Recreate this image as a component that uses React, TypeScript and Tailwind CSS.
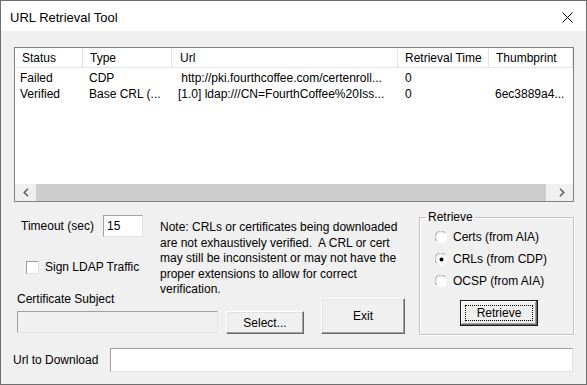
import React from "react";

const Radio = ({ checked }: { checked?: boolean }) => (
  <svg width="13" height="13" viewBox="0 0 13 13" className="shrink-0">
    <circle cx="6.5" cy="6.5" r="5.5" fill="#ffffff" />
    <path d="M1.6 10 A5.5 5.5 0 0 1 10 1.6" stroke="#a0a0a0" strokeWidth="1" fill="none" />
    <path d="M2.5 9.5 A4.5 4.5 0 0 1 9.5 2.5" stroke="#e3e3e3" strokeWidth="1" fill="none" />
    {checked && <circle cx="6.5" cy="6.5" r="2" fill="#000000" />}
  </svg>
);

const Button = ({ label, className }: { label: string; className: string }) => (
  <div
    className={`flex items-center justify-center bg-[#f0f0f0] border-t border-l border-white border-r border-b border-r-[#696969] border-b-[#696969] shadow-[inset_-1px_-1px_0_#a0a0a0,inset_1px_1px_0_#e3e3e3] ${className}`}
  >
    {label}
  </div>
);

const cols = [
  { w: "w-[68px]", head: "Status", hp: "pl-[7px]" },
  { w: "w-[89px]", head: "Type", hp: "pl-[7px]" },
  { w: "w-[226px]", head: "Url", hp: "pl-[8px]" },
  { w: "w-[91px]", head: "Retrieval Time", hp: "pl-[7px]" },
  { w: "w-[84px]", head: "Thumbprint", hp: "pl-[7px]" },
];

const rows = [
  ["Failed", "CDP", " http://pki.fourthcoffee.com/certenroll...", "0", ""],
  ["Verified", "Base CRL (...", "[1.0] ldap:///CN=FourthCoffee%20Iss...", "0", "6ec3889a4..."],
];

const rowPad = ["pl-[5px]", "pl-[6px]", "pl-[6px]", "pl-[7px]", "pl-[6px]"];

export default function App() {
  return (
    <div className="w-[587px] h-[385px] border border-[#6e6e6e] bg-[#f0f0f0] flex flex-col font-['Liberation_Sans',Arial,sans-serif] text-[12px] text-black overflow-hidden leading-[14px]">
      {/* Title bar */}
      <div className="h-[30px] bg-white flex items-center justify-between pl-[9px] pr-[13px] pt-[3px] shrink-0">
        <span className="text-[13px]">URL Retrieval Tool</span>
        <svg width="11" height="11" viewBox="0 0 11 11">
          <path d="M0.5 0.5 L10.5 10.5 M10.5 0.5 L0.5 10.5" stroke="#000" strokeWidth="1" />
        </svg>
      </div>

      {/* Client */}
      <div className="flex flex-col flex-1">
        {/* List view */}
        <div className="mt-[16px] ml-[13px] w-[560px] h-[155px] border border-[#828282] bg-white flex flex-col">
          <div className="h-[20px] flex border-b border-[#e5e5e5] shrink-0">
            {cols.map((c, i) => (
              <div
                key={i}
                className={`${c.w} ${c.hp} h-full flex items-center border-r border-[#e5e5e5] shrink-0 whitespace-nowrap`}
              >
                {c.head}
              </div>
            ))}
          </div>
          <div className="flex-1 pt-[2px]">
            {rows.map((r, ri) => (
              <div key={ri} className="h-[16px] flex items-center">
                {r.map((cell, ci) => (
                  <div
                    key={ci}
                    className={`${cols[ci].w} ${rowPad[ci]} shrink-0 whitespace-pre overflow-hidden`}
                  >
                    {cell}
                  </div>
                ))}
              </div>
            ))}
          </div>
          <div className="h-[17px] flex bg-[#f0f0f0] shrink-0">
            <div className="w-[21px] flex items-center justify-center">
              <svg width="6" height="9" viewBox="0 0 6 9">
                <path d="M5 0.8 L1.3 4.5 L5 8.2" stroke="#606060" strokeWidth="1.6" fill="none" />
              </svg>
            </div>
            <div className="flex-1 bg-[#cdcdcd]" />
            <div className="w-[27px] flex items-center justify-center pl-[5px]">
              <svg width="6" height="9" viewBox="0 0 6 9">
                <path d="M1 0.8 L4.7 4.5 L1 8.2" stroke="#606060" strokeWidth="1.6" fill="none" />
              </svg>
            </div>
          </div>
        </div>

        {/* Lower section */}
        <div className="flex">
          <div className="ml-[16px] w-[388px] flex flex-col">
            <div className="mt-[13px] h-[77px] flex">
              <div className="w-[143px] shrink-0 flex flex-col">
                <div className="flex items-center">
                  <span className="ml-[4px] w-[82px]">Timeout (sec)</span>
                  <div className="w-[40px] h-[22px] bg-white border-t border-l border-[#a0a0a0] border-r border-b border-r-[#e3e3e3] border-b-[#e3e3e3] flex items-center pl-[3px]">
                    15
                  </div>
                </div>
                <div className="mt-[22px] ml-[9px] flex items-center h-[16px]">
                  <div className="w-[13px] h-[13px] bg-white border border-[#a0a0a0] border-r-[#e3e3e3] border-b-[#e3e3e3]" />
                  <span className="ml-[6px]">Sign LDAP Traffic</span>
                </div>
              </div>
              <div className="mt-[5px] leading-[15.5px] whitespace-pre">
                <div>Note: CRLs or certificates being downloaded</div>
                <div>are not exhaustively verified.  A CRL or cert</div>
                <div>may still be inconsistent or may not have the</div>
                <div>proper extensions to allow for correct</div>
                <div>verification.</div>
              </div>
            </div>
            <div className="flex items-end">
              <div className="flex flex-col mb-[1px]">
                <span className="h-[14px]">Certificate Subject</span>
                <div className="mt-[5px] w-[201px] h-[22px] bg-[#f0f0f0] border-t border-l border-[#a0a0a0] border-r border-b border-r-[#e3e3e3] border-b-[#e3e3e3]" />
              </div>
              <Button label="Select..." className="ml-[8px] w-[78px] h-[23px]" />
              <Button label="Exit" className="ml-[17px] w-[84px] h-[36px]" />
            </div>
          </div>

          <fieldset className="ml-[14px] mt-[8px] w-[155px] h-[125px] border border-[#c4c4c4] shadow-[1px_1px_0_#ffffff,inset_1px_1px_0_#ffffff] flex flex-col">
            <legend className="ml-[6px] px-[2px] leading-[14px]">Retrieve</legend>
            <div className="pt-[2px] pl-[15px]">
              {[
                ["Certs (from AIA)", false],
                ["CRLs (from CDP)", true],
                ["OCSP (from AIA)", false],
              ].map(([label, checked], i) => (
                <div key={i} className="h-[22px] flex items-center">
                  <Radio checked={checked as boolean} />
                  <span className="ml-[5px]">{label as string}</span>
                </div>
              ))}
            </div>
            <div className="mt-[8px] ml-[40px] w-[78px] h-[26px] border border-[#1a1a1a] bg-[#f0f0f0] shadow-[inset_-1px_-1px_0_#696969,inset_1px_1px_0_#ffffff,inset_-2px_-2px_0_#a0a0a0] p-[4px]">
              <div className="w-full h-full border border-dotted border-black flex items-center justify-center">
                Retrieve
              </div>
            </div>
          </fieldset>
        </div>

        {/* Url to download */}
        <div className="mt-[13px] flex items-center pl-[12px]">
          <span className="w-[97px]">Url to Download</span>
          <div className="w-[463px] h-[24px] bg-white border-t border-l border-[#a0a0a0] border-r border-b border-r-[#e3e3e3] border-b-[#e3e3e3]" />
        </div>
      </div>
    </div>
  );
}
